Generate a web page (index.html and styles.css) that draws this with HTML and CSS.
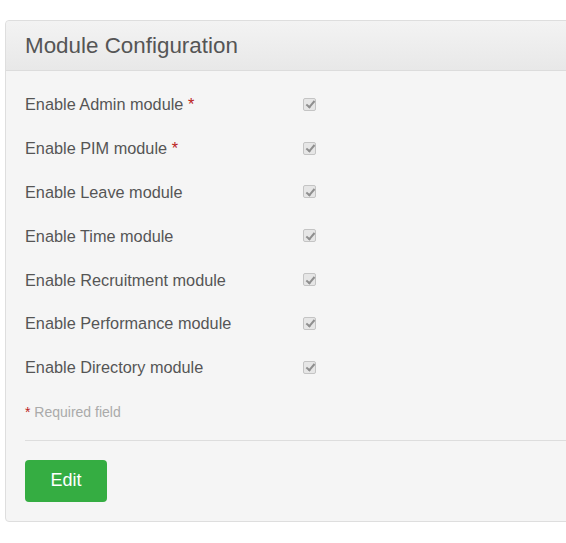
FILE: index.html
```html
<!DOCTYPE html>
<html>
<head>
<meta charset="utf-8">
<link rel="stylesheet" href="styles.css">
</head>
<body>
<div class="panel">
  <div class="panel-head"><h1 class="title">Module Configuration</h1></div>
  <div class="panel-body">
    <form class="form">
      <div class="row"><label class="label">Enable Admin module <span class="req">*</span></label><input class="check" type="checkbox" checked disabled></div>
      <div class="row"><label class="label">Enable PIM module <span class="req">*</span></label><input class="check" type="checkbox" checked disabled></div>
      <div class="row"><label class="label">Enable Leave module</label><input class="check" type="checkbox" checked disabled></div>
      <div class="row"><label class="label">Enable Time module</label><input class="check" type="checkbox" checked disabled></div>
      <div class="row"><label class="label">Enable Recruitment module</label><input class="check" type="checkbox" checked disabled></div>
      <div class="row"><label class="label">Enable Performance module</label><input class="check" type="checkbox" checked disabled></div>
      <div class="row"><label class="label">Enable Directory module</label><input class="check" type="checkbox" checked disabled></div>
      <p class="note"><span class="req">*</span> Required field</p>
      <hr class="divider">
      <button type="button" class="btn">Edit</button>
    </form>
  </div>
</div>
</body>
</html>
```
FILE: styles.css
```css
html, body {
  margin: 0;
  padding: 0;
  background: #fff;
  overflow: hidden;
}
body {
  font-family: "Liberation Sans", Arial, sans-serif;
  color: #555;
  padding: 20px 0 0 5px;
}
.panel {
  width: 620px;
  border: 1px solid #dedede;
  border-radius: 4px;
  background: #f5f5f5;
  box-sizing: border-box;
}
.panel-head {
  height: 49px;
  background: linear-gradient(#f3f3f3, #e8e8e8);
  border-bottom: 1px solid #dcdcdc;
  border-radius: 4px 4px 0 0;
  display: flex;
  align-items: center;
  padding-left: 19px;
}
.title {
  margin: 0;
  font-size: 22.4px;
  font-weight: normal;
  color: #555;
}
.panel-body {
  padding: 12px 0 19px 19px;
}
.form {
  display: flex;
  flex-direction: column;
}
.row {
  display: flex;
  align-items: center;
  height: 43.8px;
}
.label {
  width: 278px;
  font-size: 16.3px;
  color: #555;
}
.req {
  color: #b22;
}
.check {
  appearance: none;
  -webkit-appearance: none;
  position: relative;
  margin: -1px 0 0;
  width: 13px;
  height: 13px;
  box-sizing: border-box;
  border: 1px solid #c4c4c4;
  border-radius: 2px;
  background: #e6e6e6;
}
.check::after {
  content: "";
  position: absolute;
  left: 3.5px;
  top: 0.5px;
  width: 3px;
  height: 7px;
  border: solid #8f8f8f;
  border-width: 0 2px 2px 0;
  transform: rotate(40deg);
}
.note {
  margin: 14px 0 0;
  font-size: 14px;
  color: #aaa;
}
.divider {
  margin: 20px 0 0;
  border: 0;
  border-top: 1px solid #ddd;
  height: 0;
}
.btn {
  margin-top: 19px;
  align-self: flex-start;
  width: 82px;
  height: 42px;
  background: #35ad42;
  border: 0;
  border-radius: 4px;
  color: #fff;
  font-family: "Liberation Sans", Arial, sans-serif;
  font-size: 18px;
}
```
